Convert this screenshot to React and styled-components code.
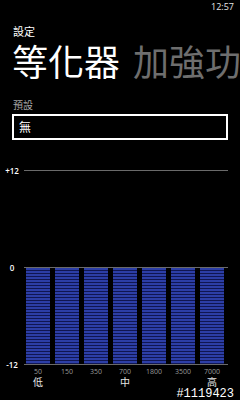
import styled, { createGlobalStyle } from "styled-components";

const GlobalStyle = createGlobalStyle`
  html, body {
    margin: 0;
    padding: 0;
    background: #000;
  }
  body {
    font-family: "Noto Sans", "Noto Sans CJK TC", sans-serif;
    color: #fff;
  }
`;

const cjk = `"Noto Sans", "Noto Sans CJK TC", sans-serif`;

const bands = [
  { freq: "50", level: 0 },
  { freq: "150", level: 0 },
  { freq: "350", level: 0 },
  { freq: "700", level: 0 },
  { freq: "1800", level: 0 },
  { freq: "3500", level: 0 },
  { freq: "7000", level: 0 },
];

const App = () => {
  return (
    <Screen>
      <GlobalStyle />
      <StatusBar>12:57</StatusBar>
      <Header>
        <AppTitle>設定</AppTitle>
        <Pivot>
          <PivotItem active>等化器</PivotItem>
          <PivotItem>加強功</PivotItem>
        </Pivot>
      </Header>

      <Field>
        <FieldLabel>預設</FieldLabel>
        <PresetBox>無</PresetBox>
      </Field>

      <Chart>
        <ScaleRow>
          <ScaleLabel>+12</ScaleLabel>
          <ScaleLine />
        </ScaleRow>
        <Gap />
        <ScaleRow>
          <ScaleLabel>0</ScaleLabel>
          <ScaleLine />
        </ScaleRow>
        <BarArea>
          {bands.map((b) => (
            <Bar key={b.freq} />
          ))}
        </BarArea>
        <ScaleRow>
          <ScaleLabel>-12</ScaleLabel>
          <ScaleLine />
        </ScaleRow>
        <FreqRow>
          {bands.map((b) => (
            <Freq key={b.freq}>{b.freq}</Freq>
          ))}
        </FreqRow>
        <RangeRow>
          <Range>低</Range>
          <Range />
          <Range />
          <Range>中</Range>
          <Range />
          <Range />
          <Range>高</Range>
        </RangeRow>
      </Chart>

      <Tag>#1119423</Tag>
    </Screen>
  );
};

export default App;

const Screen = styled.div`
  position: relative;
  width: 240px;
  height: 400px;
  overflow: hidden;
  background: #000;
`;

const StatusBar = styled.div`
  height: 16px;
  line-height: 14px;
  padding-right: 6px;
  text-align: right;
  font-family: "Open Sans", "Noto Sans", sans-serif;
  font-size: 9px;
  color: #e6e6e6;
`;

const Header = styled.div`
  padding-left: 12px;
  margin-top: 8px;
`;

const AppTitle = styled.div`
  font-family: ${cjk};
  font-size: 11px;
  line-height: 16px;
  padding-left: 1px;
`;

const Pivot = styled.div`
  display: flex;
  gap: 13px;
  white-space: nowrap;
  margin-top: 3px;
`;

const PivotItem = styled.div`
  font-family: ${cjk};
  font-size: 36px;
  line-height: 40px;
  color: ${(p) => (p.active ? "#fff" : "#6e6e6e")};
`;

const Field = styled.div`
  padding: 0 12px;
  margin-top: 15px;
`;

const FieldLabel = styled.div`
  font-family: ${cjk};
  font-size: 10px;
  line-height: 14px;
  color: #a6a6a6;
  padding-left: 1px;
`;

const PresetBox = styled.div`
  margin-top: 2px;
  height: 22px;
  border: 2px solid #fff;
  padding-left: 5px;
  display: flex;
  align-items: center;
  font-family: ${cjk};
  font-size: 12px;
  color: #fff;
`;

const Chart = styled.div`
  margin-top: 30px;
  padding-right: 12px;
`;

const ScaleRow = styled.div`
  display: flex;
  align-items: center;
  height: 1px;
`;

const ScaleLabel = styled.div`
  width: 24px;
  text-align: center;
  font-family: "Open Sans", "Noto Sans", sans-serif;
  font-weight: 600;
  font-size: 8px;
  line-height: 10px;
  color: #fff;
`;

const ScaleLine = styled.div`
  flex: 1;
  height: 1px;
  background: #6a6a6a;
`;

const Gap = styled.div`
  height: 96px;
`;

const BarArea = styled.div`
  display: flex;
  gap: 5px;
  height: 96px;
  padding-left: 26px;
  padding-right: 4px;
`;

const Bar = styled.div`
  flex: 1;
  background: repeating-linear-gradient(
    to bottom,
    #2c3ea6 0px,
    #2c3ea6 2px,
    #101652 2px,
    #101652 3px
  );
`;

const FreqRow = styled.div`
  display: flex;
  gap: 5px;
  padding-left: 26px;
  padding-right: 4px;
  margin-top: 3px;
`;

const Freq = styled.div`
  flex: 1;
  text-align: center;
  font-family: "Open Sans", "Noto Sans", sans-serif;
  font-size: 7px;
  line-height: 8px;
  color: #9a9a9a;
`;

const RangeRow = styled(FreqRow)`
  margin-top: 1px;
`;

const Range = styled.div`
  flex: 1;
  text-align: center;
  font-family: ${cjk};
  font-size: 10px;
  line-height: 11px;
  color: #e6e6e6;
`;

const Tag = styled.div`
  position: absolute;
  right: 6px;
  bottom: 0px;
  font-family: "Liberation Mono", "DejaVu Sans Mono", monospace;
  font-size: 12px;
  line-height: 10px;
  padding-bottom: 1px;
  color: #fff;
`;
